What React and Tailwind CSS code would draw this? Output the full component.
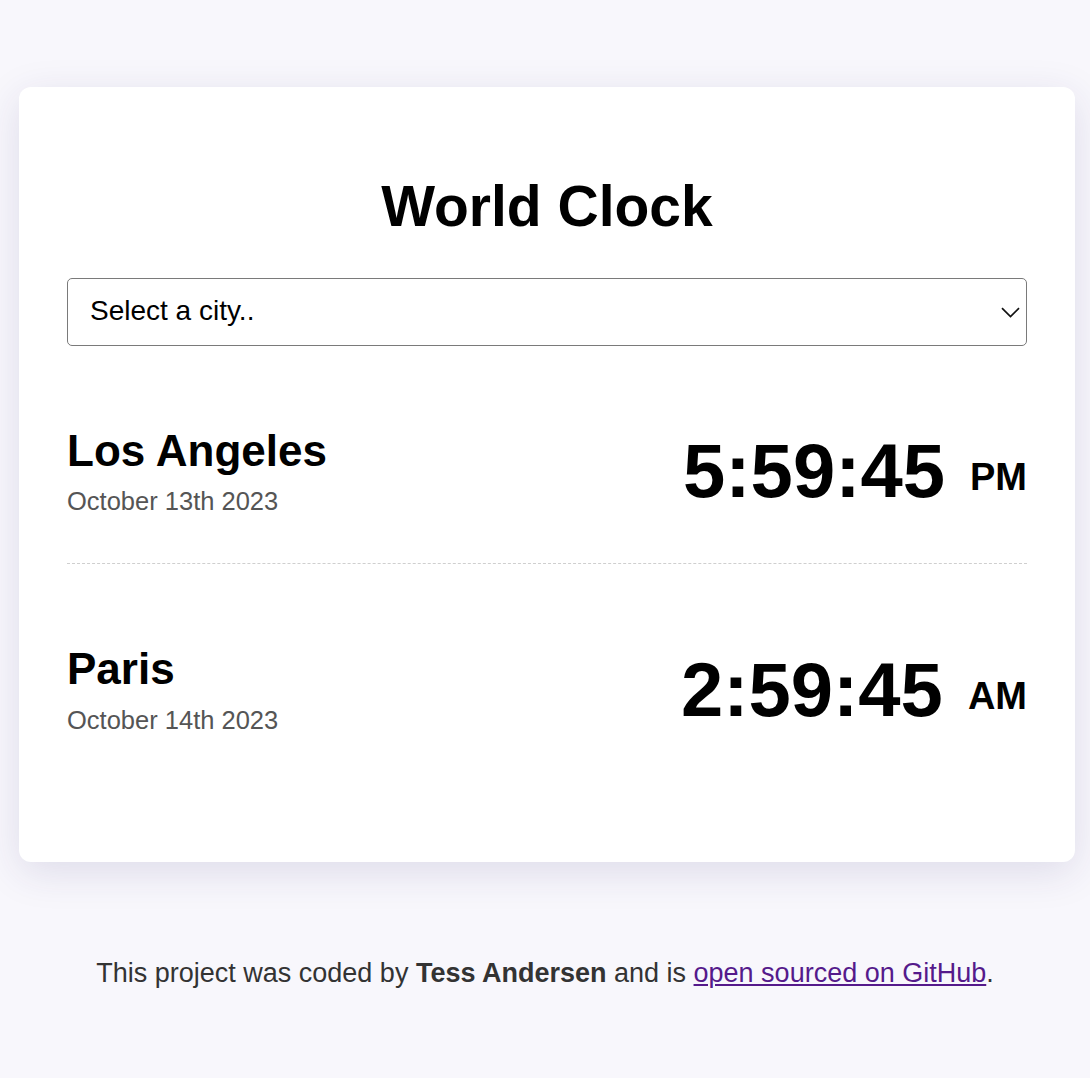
import { useState } from "react";

const cities = [
  { name: "Los Angeles", date: "October 13th 2023", time: "5:59:45", period: "PM" },
  { name: "Paris", date: "October 14th 2023", time: "2:59:45", period: "AM" },
];

function CityRow({ city, last }) {
  return (
    <div
      className={
        "flex items-center justify-between pt-[80px] pb-[47px] " +
        (last ? "" : "border-b border-dashed border-[#cfcfcf]")
      }
    >
      <div className="flex flex-col">
        <h2 className="text-[44px] font-bold text-black">{city.name}</h2>
        <div className="mt-[11px] text-[25.5px] text-[#555]">{city.date}</div>
      </div>
      <div className="flex items-start">
        <span className="text-[76px] font-bold text-black">{city.time}</span>
        <span className="ml-[25px] mt-[29px] text-[38px] font-bold text-black">{city.period}</span>
      </div>
    </div>
  );
}

export default function App() {
  const [city, setCity] = useState("");

  return (
    <div className="min-h-screen bg-[#f8f7fc] pt-[87px] font-['Liberation_Sans',Arial,sans-serif] leading-[1.15]">
      <div className="ml-[19px] mr-[15px] rounded-xl bg-white px-12 pt-[87px] pb-[80px] shadow-[0_10px_40px_rgba(50,40,110,0.13)]">
        <h1 className="text-center text-[57px] font-bold text-black">World Clock</h1>

        <div className="relative mt-[38px]">
          <select
            value={city}
            onChange={(e) => setCity(e.target.value)}
            className="h-[68px] w-full appearance-none rounded-[5px] border border-[#7a7a7a] bg-white pl-[22px] text-[28px] text-black outline-none"
          >
            <option value="">Select a city..</option>
            <option value="tokyo">Tokyo</option>
            <option value="sydney">Sydney</option>
          </select>
          <svg
            className="pointer-events-none absolute right-[7px] top-[29px]"
            width="19"
            height="11"
            viewBox="0 0 19 11"
            fill="none"
          >
            <path d="M1 1.2l8.5 8.3L18 1.2" stroke="#111" strokeWidth="1.7" />
          </svg>
        </div>

        {cities.map((c, i) => (
          <CityRow key={c.name} city={c} last={i === cities.length - 1} />
        ))}
      </div>

      <p className="mt-[96px] pb-[60px] text-center text-[27px] text-[#333]">
        This project was coded by <strong className="font-bold">Tess Andersen</strong> and is{" "}
        <a href="#" className="text-[#551a8b] underline">
          open sourced on GitHub
        </a>
        .
      </p>
    </div>
  );
}
